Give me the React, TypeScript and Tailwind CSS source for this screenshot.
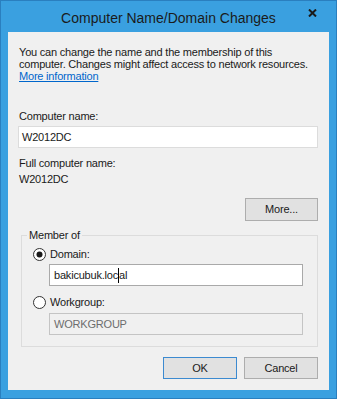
import React from "react";

const font = { fontFamily: '"Liberation Sans", Arial, sans-serif' };

function Radio({ checked }: { checked: boolean }) {
  return (
    <svg width="13" height="13" viewBox="0 0 13 13" className="shrink-0">
      <circle cx="6.5" cy="6.5" r="6" fill="#ffffff" stroke="#333333" strokeWidth="1" />
      {checked && <circle cx="6.5" cy="6.5" r="3" fill="#1a1a1a" />}
    </svg>
  );
}

export default function App() {
  return (
    <div className="relative w-[337px] h-[399px] overflow-hidden bg-[#3aa0e0] border border-[#2a7fbf] flex flex-col" style={font}>
      {/* Title bar */}
      <div className="relative h-[31px] shrink-0 flex items-center justify-center">
        <span className="text-[14px] text-[#1b1b1b] leading-none mt-[2px] whitespace-nowrap">Computer Name/Domain Changes</span>
        <svg className="absolute left-[307px] top-[8px]" width="9" height="8" viewBox="0 0 9 8">
          <path d="M1 0.5 L8 7.5 M8 0.5 L1 7.5" stroke="#1a1a1a" strokeWidth="2" />
        </svg>
      </div>

      {/* Client area */}
      <div className="mx-[7px] mb-[8px] flex-1 bg-[#f0f0f0] pl-[10px] pr-[11px] pt-[14px] text-[11px] tracking-[-0.2px] text-[#1a1a1a] flex flex-col">
        <p className="pl-[1px] leading-[12px] whitespace-nowrap">
          You can change the name and the membership of this
          <br />
          computer. Changes might affect access to network resources.
          <br />
          <span className="text-[#0066cc] underline">More information</span>
        </p>

        <div className="mt-[28px] pl-[1px] leading-[12px]">Computer name:</div>
        <div className="mt-[4px] h-[22px] bg-white border border-[#dcdcdc] flex items-center pl-[3px]">W2012DC</div>

        <div className="mt-[9px] pl-[1px] leading-[12px]">Full computer name:</div>
        <div className="mt-[4px] pl-[1px] leading-[12px]">W2012DC</div>

        <div className="mt-[13px] flex justify-end">
          <div className="w-[73px] h-[23px] bg-[#e1e1e1] border border-[#adadad] flex items-center justify-center">More...</div>
        </div>

        <div className="mt-[14px] ml-[3px] border border-[#dcdcdc] pb-[11px] flex flex-col">
          <div className="-mt-[7px] ml-[5px] self-start bg-[#f0f0f0] px-[2px] leading-[12px]">Member of</div>
          <div className="mt-[7px] ml-[11px] flex items-center gap-[4px] leading-[13px]">
            <Radio checked={true} />
            <span>Domain:</span>
          </div>
          <div className="mt-[3px] ml-[27px] mr-[14px] h-[22px] bg-white border border-[#a9a9a9] flex items-center pl-[4px]">
            <span>bakicubuk.loc</span>
            <span className="inline-block w-px h-[15px] bg-black" />
            <span>al</span>
          </div>
          <div className="mt-[10px] ml-[11px] flex items-center gap-[4px] leading-[13px]">
            <Radio checked={false} />
            <span>Workgroup:</span>
          </div>
          <div className="mt-[4px] ml-[27px] mr-[14px] h-[22px] bg-[#f0f0f0] border border-[#c4c4c4] flex items-center pl-[4px] text-[#6d6d6d]">
            WORKGROUP
          </div>
        </div>

        <div className="mt-[10px] flex justify-end gap-[7px]">
          <div className="w-[74px] h-[22px] bg-[#e1e1e1] border border-[#3c8ad0] flex items-center justify-center">OK</div>
          <div className="w-[74px] h-[22px] bg-[#e1e1e1] border border-[#adadad] flex items-center justify-center">Cancel</div>
        </div>
      </div>
    </div>
  );
}
